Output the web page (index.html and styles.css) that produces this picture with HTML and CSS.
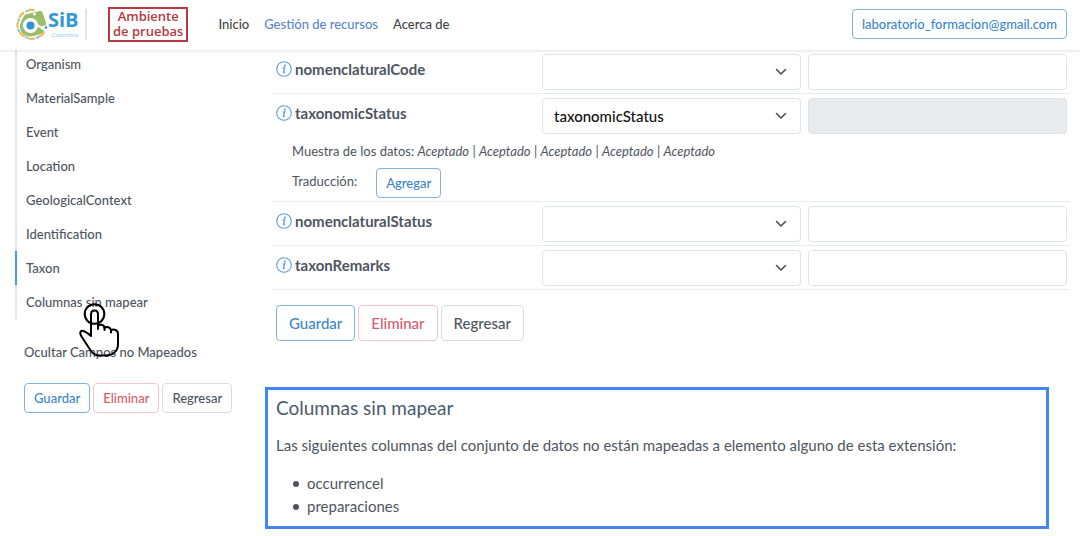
FILE: index.html
```html
<!DOCTYPE html>
<html lang="es">
<head>
<meta charset="utf-8">
<meta name="viewport" content="width=device-width, initial-scale=1">
<title>SiB Colombia - Mapeo</title>
<link rel="stylesheet" href="styles.css">
</head>
<body>
<svg class="sprite" aria-hidden="true">
  <symbol id="info" viewBox="0 0 16 16">
    <circle cx="8" cy="8" r="7.3" fill="none" stroke="currentColor" stroke-width="1.1"/>
    <circle cx="8.9" cy="4.6" r="1.05" fill="currentColor"/>
    <path d="M6.7 7.2 8.6 6.9 7.5 11.3Q7.4 12.1 8.8 11.5" fill="none" stroke="currentColor" stroke-width="1.3"/>
  </symbol>
</svg>
<header class="topbar">
  <a class="brand" href="#" aria-label="SiB Colombia">
    <svg class="brand-mark" viewBox="0 0 32 32" aria-hidden="true">
      <g fill="none" stroke-width="2">
        <path d="M3.500 10.500Q4.500 6 8 4.500M12 2.500Q15.500.8 18.500 2.500M1.800 20Q.8 17 2 14" stroke="#f3b64c"/>
        <path d="M4 24Q5.500 27.500 9 28.500M23 28.500Q26.500 27.500 28 24M12.500 30.300Q16 31.500 19 30.300" stroke="#f3b64c"/>
        <path d="M9.500 3.800 12 2.700M2 13.500 3.200 11M2 21 3.500 24M9.500 29 12 30.200M20 30 23 28.800" stroke="#7cc4e8"/>
      </g>
      <path d="M9 6.500 24 3Q26 2.500 26.700 5L30 14.500Q30.500 17 28.500 17.600L24 18.500 28.500 23Q26 26 21 27 15 29.500 10 27.500 3 24.500 4 17 5 12 9 6.500Z" fill="#99bd69"/>
      <circle cx="14.500" cy="17.500" r="7.600" fill="#fff"/>
      <circle cx="14.500" cy="17.500" r="4" fill="#2f93d6"/>
      <circle cx="18.500" cy="6" r="1.500" fill="#fff"/>
      <path d="m21 16.500 6.500 5" stroke="#fff" stroke-width="2"/>
      <circle cx="30" cy="19.500" r="1.300" fill="#2f93d6"/>
    </svg>
    <span class="brand-text"><span class="brand-name">SiB</span><span class="brand-country">Colombia</span></span>
  </a>
  <div class="env"><span>Ambiente</span><span>de pruebas</span></div>
  <nav class="menu" aria-label="Principal">
    <a href="#">Inicio</a>
    <a class="current" href="#">Gestión de recursos</a>
    <a href="#">Acerca de</a>
  </nav>
  <button class="btn btn-sm btn-blue account" type="button">laboratorio_formacion@gmail.com</button>
</header>
<div class="page">
  <aside class="side">
    <nav class="toc" aria-label="Secciones">
      <a href="#">Organism</a>
      <a href="#">MaterialSample</a>
      <a href="#">Event</a>
      <a href="#">Location</a>
      <a href="#">GeologicalContext</a>
      <a href="#">Identification</a>
      <a class="active" href="#">Taxon</a>
      <a class="pointed" href="#unmapped">Columnas sin mapear
        <svg class="pointer" viewBox="0 0 42 56" aria-hidden="true">
          <circle cx="15.500" cy="12" r="9.800" fill="none" stroke="#000" stroke-width="2"/>
          <path d="M12 32V12.500Q12 8.500 15.500 8.500T19 12.500V24Q20 22.300 22.500 22.800 25.300 23.300 25.500 26 27 24.500 29.500 25.200 31.800 26 32 28.500 34 27 36.500 28Q39 29 39 32V42Q39 47.500 35.500 50.500 32 53.500 26 53.500H21Q15 53.500 12 49L2.500 34.500Q.8 31.500 1.500 29.800 2.500 28.300 5 29.200 8.500 30.500 12 34Z" fill="none" stroke="#000" stroke-width="2" stroke-linejoin="round"/>
          <path d="M19 23.500V27M25.500 25.500V28M32 28V30.500" fill="none" stroke="#000" stroke-width="2" stroke-linecap="round"/>
        </svg>
      </a>
    </nav>
    <a class="toggle" href="#">Ocultar Campos no Mapeados</a>
    <div class="actions">
      <button class="btn btn-sm btn-blue" type="button">Guardar</button>
      <button class="btn btn-sm btn-red" type="button">Eliminar</button>
      <button class="btn btn-sm btn-gray" type="button">Regresar</button>
    </div>
  </aside>
  <main class="content">
    <form>
      <div class="field">
        <label for="code"><svg class="info"><use href="#info"/></svg>nomenclaturalCode</label>
        <select id="code"><option></option></select>
        <input type="text" aria-label="Valor de nomenclaturalCode">
      </div>
      <div class="field">
        <label for="tax"><svg class="info"><use href="#info"/></svg>taxonomicStatus</label>
        <select id="tax"><option>taxonomicStatus</option></select>
        <input type="text" aria-label="Valor de taxonomicStatus" disabled>
        <div class="details">
          <p class="sample">Muestra de los datos: <em>Aceptado</em> | <em>Aceptado</em> | <em>Aceptado</em> | <em>Aceptado</em> | <em>Aceptado</em></p>
          <div class="translation"><span>Traducción:</span><button class="btn btn-sm btn-blue" type="button">Agregar</button></div>
        </div>
      </div>
      <div class="field">
        <label for="status"><svg class="info"><use href="#info"/></svg>nomenclaturalStatus</label>
        <select id="status"><option></option></select>
        <input type="text" aria-label="Valor de nomenclaturalStatus">
      </div>
      <div class="field">
        <label for="remarks"><svg class="info"><use href="#info"/></svg>taxonRemarks</label>
        <select id="remarks"><option></option></select>
        <input type="text" aria-label="Valor de taxonRemarks">
      </div>
      <div class="actions form-actions">
        <button class="btn btn-blue" type="button">Guardar</button>
        <button class="btn btn-red" type="button">Eliminar</button>
        <button class="btn btn-gray" type="button">Regresar</button>
      </div>
    </form>
    <section class="unmapped" id="unmapped">
      <h2>Columnas sin mapear</h2>
      <p>Las siguientes columnas del conjunto de datos no están mapeadas a elemento alguno de esta extensión:</p>
      <ul>
        <li>occurrencel</li>
        <li>preparaciones</li>
      </ul>
    </section>
  </main>
</div>
</body>
</html>
```
FILE: styles.css
```css
* { box-sizing: border-box; }
body {
  margin: 0;
  background: #fff;
  color: #4e555f;
  font: 15px/23px Lato, "Liberation Sans", sans-serif;
}
a { color: inherit; text-decoration: none; }
.sprite { display: none; }

.topbar {
  position: relative;
  z-index: 1;
  display: flex;
  align-items: center;
  height: 50px;
  padding: 0 13px 2px 16px;
  background: #fff;
  box-shadow: 0 1px 3px rgba(0, 0, 0, .12);
}
.brand {
  display: flex;
  align-items: center;
  height: 31px;
  padding-right: 7px;
  border-right: 2px solid #e2e2e2;
}
.brand-mark { width: 32px; height: 32px; }
.brand-text { display: flex; flex-direction: column; width: 30px; }
.brand-name { color: #3597d3; font: bold 20px/22px "Open Sans", sans-serif; }
.brand-country { color: #8accec; font: 6px/9px "Open Sans", sans-serif; text-align: right; }
.env {
  display: flex;
  flex-direction: column;
  align-items: center;
  margin-left: 21px;
  padding: 0 3px 1px;
  border: 2px solid #b73a40;
  color: #b73a40;
  font: 600 13px/15px "Open Sans", sans-serif;
}
.menu {
  display: flex;
  gap: 15px;
  margin-left: 30px;
  color: #444;
  font-size: 13px;
  font-weight: 500;
}
.menu .current { color: #5b87c7; }
.account { margin-left: auto; }

.btn {
  height: 36px;
  padding: 0 12px;
  border: 1px solid;
  border-radius: 4px;
  background: #fff;
  font: 500 15px/20px Lato, sans-serif;
}
.btn-sm { height: 30px; padding: 0 9px; font-size: 13px; }
.btn-blue { border-color: #82b3de; color: #3b87cb; }
.btn-red { border-color: #f3c5ca; color: #d95c69; }
.btn-gray { border-color: #dadee3; color: #4e555f; }
.actions { display: flex; gap: 3px; }

.page {
  display: grid;
  grid-template-columns: 258px 1fr;
  padding: 0 10px 7px 15px;
}
.toc { margin-top: -3px; font-size: 13px; font-weight: 500; }
.toc a {
  display: block;
  height: 34px;
  padding-left: 9px;
  border-left: 2px solid #e3e6e9;
  line-height: 34px;
}
.toc .active { border-color: #4a9bd0; }
.toc .pointed { position: relative; width: 150px; }
.pointer { position: absolute; top: 17px; left: 62px; width: 42px; height: 56px; }
.toggle { display: block; margin: 22px 0 19px 9px; font-size: 13px; font-weight: 500; }
.side .actions { margin-left: 9px; }

.field {
  display: grid;
  grid-template-columns: repeat(3, 1fr);
  column-gap: 7px;
  padding: 4px 3px 3px;
  border-bottom: 1px solid #e9ebed;
}
.field label {
  display: flex;
  align-items: center;
  gap: 3px;
  height: 30px;
  font-weight: bold;
}
.info { width: 16px; height: 16px; color: #5a9fd8; }
.field select, .field input {
  width: 100%;
  height: 36px;
  padding: 0 11px;
  border: 1px solid #dfe3e7;
  border-radius: 4px;
  background: #fff;
  color: #111;
  font: 500 15px/20px Lato, sans-serif;
}
.field select {
  appearance: none;
  background: #fff url("data:image/svg+xml,%3Csvg xmlns='http://www.w3.org/2000/svg' viewBox='0 0 12 8'%3E%3Cpath d='M1.500 1.500 6 6l4.500-4.500' fill='none' stroke='%23434a54' stroke-width='1.500' stroke-linecap='round'/%3E%3C/svg%3E") no-repeat right 13px center / 12px 8px;
}
.field input:disabled { background: #e9ecef; }
.details { grid-column: 1 / -1; padding: 6px 0 0 16px; font-size: 13px; }
.sample { margin: 0 0 5px; }
.translation { display: flex; gap: 19px; height: 30px; line-height: 27px; }
.form-actions { padding: 15px 3px 0; }

.unmapped {
  margin: 46px 21px 0 -8px;
  padding: 5px 8px 8px;
  border: 3px solid #4285f4;
}
.unmapped h2 { margin: 0; color: #4c5a6b; font-size: 19px; font-weight: normal; line-height: 26px; }
.unmapped p { margin: 13px 0 15px; }
.unmapped ul { margin: 0; padding-left: 17px; list-style: none; }
.unmapped li { display: flex; align-items: center; gap: 8px; }
.unmapped li::before {
  content: "";
  width: 6px;
  height: 6px;
  border-radius: 50%;
  background: currentColor;
}
```
